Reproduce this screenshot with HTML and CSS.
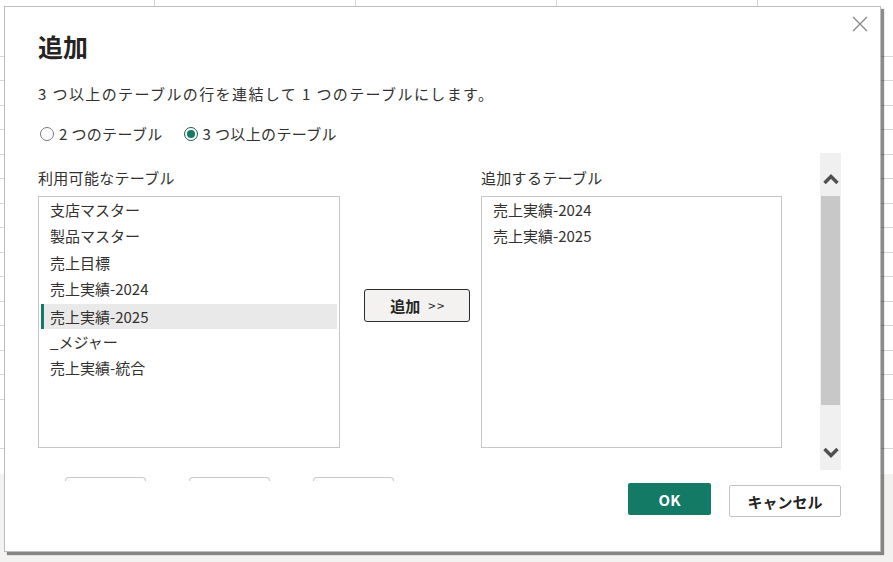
FILE: index.html
```html
<!DOCTYPE html>
<html lang="ja">
<head>
<meta charset="utf-8">
<title>追加</title>
<link rel="stylesheet" href="styles.css">
</head>
<body>
<div class="sheet">
  <div class="cols"><span></span><span></span><span></span><span></span></div>
</div>
<div class="dialog">
  <button class="close" aria-label="閉じる">
    <svg width="16" height="16" viewBox="0 0 16 16"><path d="M1 1 L15 15 M15 1 L1 15" stroke="#8a8a8a" stroke-width="1.4" fill="none"/></svg>
  </button>
  <h1 class="title">追加</h1>
  <p class="desc">3 つ以上のテーブルの行を連結して 1 つのテーブルにします。</p>
  <div class="radios">
    <label class="radio"><span class="dot"></span>2 つのテーブル</label>
    <label class="radio checked"><span class="dot"></span>3 つ以上のテーブル</label>
  </div>
  <div class="scrollarea">
    <div class="content">
      <div class="lbl">利用可能なテーブル</div>
      <div></div>
      <div class="lbl">追加するテーブル</div>
      <ul class="list">
        <li>支店マスター</li>
        <li>製品マスター</li>
        <li>売上目標</li>
        <li>売上実績-2024</li>
        <li class="sel">売上実績-2025</li>
        <li>_メジャー</li>
        <li>売上実績-統合</li>
      </ul>
      <div class="mid">
        <button class="addbtn"><b>追加</b><span class="arr">&gt;&gt;</span></button>
      </div>
      <ul class="list">
        <li>売上実績-2024</li>
        <li>売上実績-2025</li>
      </ul>
    </div>
    <div class="vscroll">
      <div class="sbtn">
        <svg width="16" height="11" viewBox="0 0 16 11"><path d="M1.5 9 L8 2.5 L14.5 9" stroke="#505050" stroke-width="3.4" fill="none"/></svg>
      </div>
      <div class="thumb"></div>
      <div class="sbtn down">
        <svg width="16" height="11" viewBox="0 0 16 11"><path d="M1.5 2 L8 8.5 L14.5 2" stroke="#505050" stroke-width="3.4" fill="none"/></svg>
      </div>
    </div>
  </div>
  <div class="hidden-btns"><span></span><span></span><span></span></div>
  <div class="footer">
    <button class="ok">OK</button>
    <button class="cancel">キャンセル</button>
  </div>
</div>
</body>
</html>
```
FILE: styles.css
```css
* { box-sizing: border-box; }
html, body { margin: 0; padding: 0; }
body {
  width: 893px;
  height: 562px;
  overflow: hidden;
  font-family: "Noto Sans CJK JP", "Noto Sans", sans-serif;
  color: #323130;
  background: #f3f2f1;
  position: relative;
}
.sheet {
  height: 474px;
  background-color: #fff;
  background-image: repeating-linear-gradient(to bottom, transparent 0, transparent 23.5px, #d6d6d6 23.5px, #d6d6d6 24.5px);
  background-position: 0 8px;
}
.cols {
  display: flex;
  height: 8px;
  padding-left: 154px;
  overflow: hidden;
}
.cols span {
  width: 201px;
  flex: none;
  border-left: 1px solid #d6d6d6;
}
.dialog {
  position: absolute;
  left: 4px;
  top: 6px;
  width: 877px;
  height: 546px;
  background: #fff;
  border: 1px solid #bdbdbd;
  box-shadow: 3px 3px 1px rgba(0,0,0,0.45);
  padding: 23px 39px 0 33px;
}
.close {
  position: absolute;
  right: 11px;
  top: 8px;
  width: 18px;
  height: 18px;
  padding: 0;
  border: 0;
  background: transparent;
  display: flex;
  align-items: center;
  justify-content: center;
}
.title {
  margin: 0;
  font-size: 25px;
  line-height: 32px;
  font-weight: 700;
  color: #252423;
}
.desc {
  margin: 22px 0 0;
  font-size: 15px;
  line-height: 20px;
  letter-spacing: 1.4px;
}
.radios {
  margin-top: 20px;
  display: flex;
  gap: 19px;
  height: 20px;
  align-items: center;
}
.radio {
  display: flex;
  align-items: center;
  font-size: 15px;
  line-height: 20px;
  padding-left: 2px;
  letter-spacing: 0.35px;
}
.dot {
  width: 14px;
  height: 14px;
  border-radius: 50%;
  border: 1px solid #7a7a7a;
  margin-right: 5px;
  display: flex;
  align-items: center;
  justify-content: center;
}
.checked .dot { border-color: #1d5c50; }
.checked .dot::after {
  content: "";
  width: 8px;
  height: 8px;
  border-radius: 50%;
  background: #137a66;
}
.scrollarea {
  margin-top: 9px;
  height: 317px;
  display: flex;
}
.content {
  width: 744px;
  padding-top: 15px;
  display: grid;
  grid-template-columns: 302px 141px 301px;
  grid-template-rows: 20px 252px;
  row-gap: 8px;
  align-content: start;
}
.lbl {
  font-size: 15px;
  line-height: 20px;
  letter-spacing: 0.3px;
}
.list {
  margin: 0;
  padding: 0 2px;
  list-style: none;
  border: 1px solid #c6c6c6;
  font-size: 15px;
}
.list li {
  height: 26.3px;
  line-height: 26px;
  padding-left: 9px;
}
.list li.sel {
  height: 25px;
  line-height: 25px;
  margin-top: 1.5px;
  margin-bottom: -0.2px;
  background: #e9e9e9;
  border-left: 3px solid #137a66;
  padding-left: 6px;
}
.mid {
  padding: 93px 0 0 24px;
}
.addbtn {
  width: 106px;
  height: 33px;
  border: 1.5px solid #2b2b2b;
  border-radius: 3px;
  background: #f3f2f1;
  font-family: inherit;
  color: #252423;
  display: flex;
  align-items: center;
  justify-content: center;
  padding: 0 0 0 2px;
}
.addbtn b { font-size: 15px; font-weight: 700; }
.addbtn .arr { font-size: 13px; margin-left: 8px; letter-spacing: 1.5px; }
.vscroll {
  margin-left: 38px;
  width: 21px;
  background: #f0f0f0;
  display: flex;
  flex-direction: column;
  padding: 0 1px;
}
.sbtn {
  height: 43px;
  display: flex;
  align-items: center;
  justify-content: center;
  padding-top: 10px;
}
.sbtn.down {
  flex: 1;
  align-items: flex-end;
  padding: 0 0 12px;
}
.thumb {
  height: 209px;
  background: #c8c8c8;
}
.hidden-btns {
  margin-top: 7px;
  height: 4px;
  display: flex;
  gap: 43px;
  padding-left: 27px;
}
.hidden-btns span {
  width: 81px;
  border: 1px solid #c8c8c8;
  border-bottom: 0;
  border-radius: 4px 4px 0 0;
}
.footer {
  margin-top: 2px;
  display: flex;
  justify-content: flex-end;
  align-items: flex-start;
  gap: 18px;
}
.footer button {
  font-family: inherit;
  font-size: 15px;
  font-weight: 700;
  height: 32px;
  border-radius: 2px;
  padding: 0;
}
.ok {
  width: 83px;
  background: #137a66;
  color: #fff;
  border: 0;
}
.cancel {
  margin-top: 2px;
  width: 112px;
  background: #fff;
  color: #252423;
  border: 1px solid #c2c2c2;
}
```
